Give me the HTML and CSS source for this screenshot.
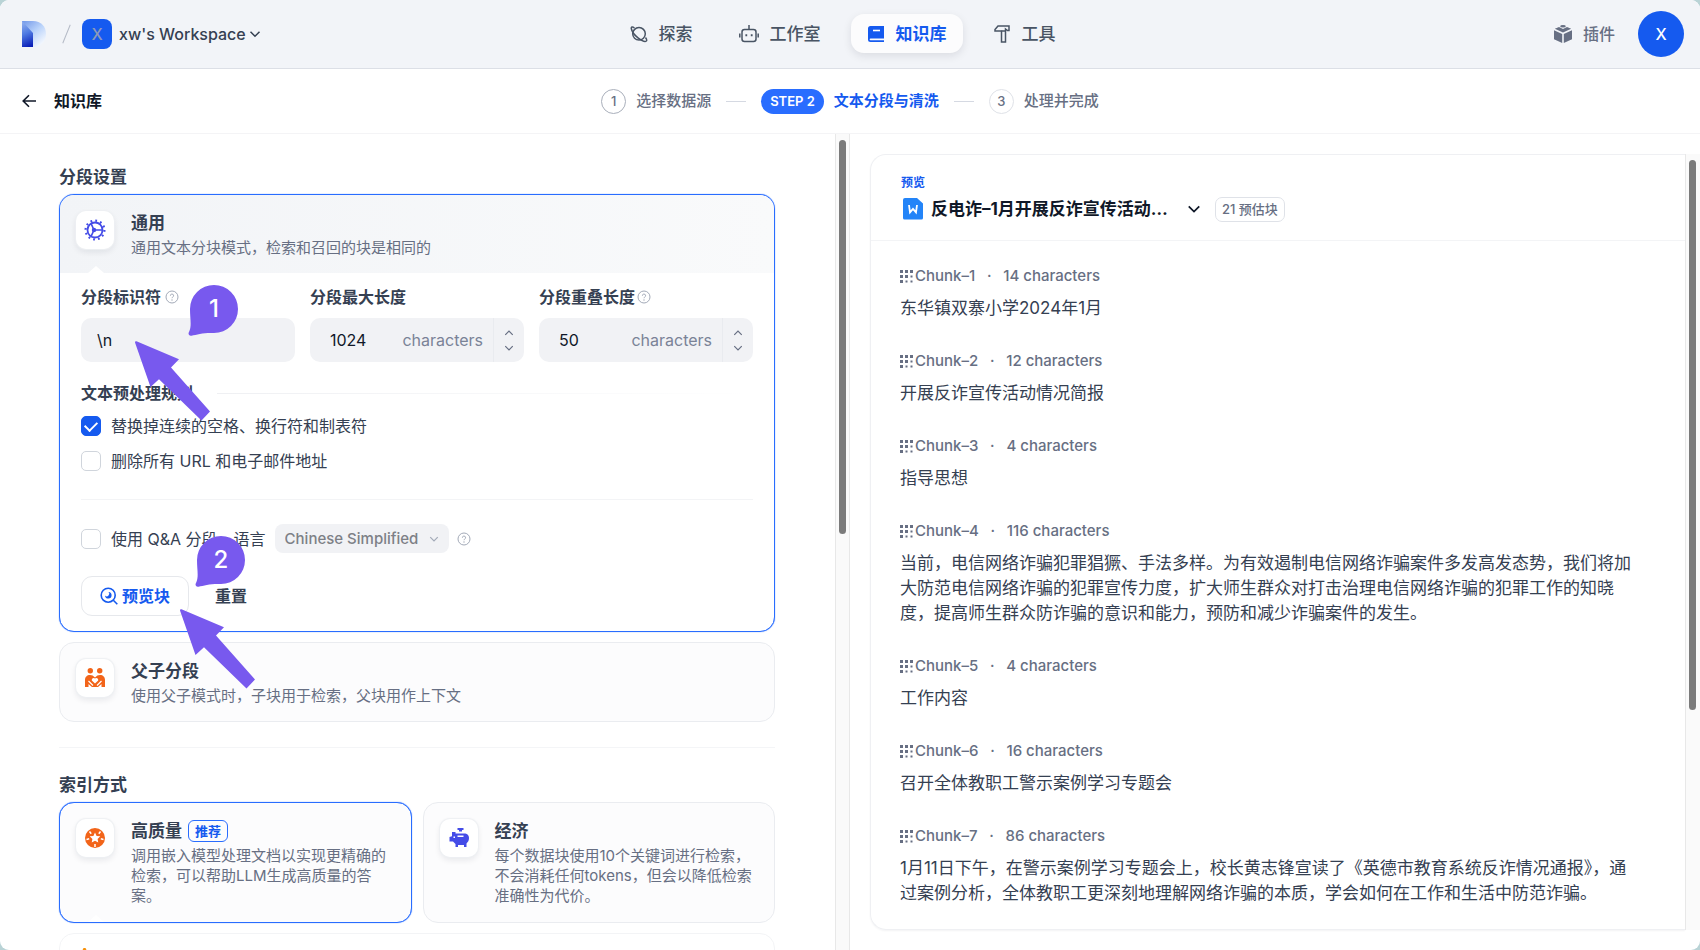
FILE: index.html
```html
<!DOCTYPE html>
<html lang="zh-CN">
<head>
<meta charset="utf-8">
<title>知识库 - 文本分段与清洗</title>
<link rel="stylesheet" href="styles.css">
</head>
<body>
<svg class="defs" aria-hidden="true">
  <defs>
    <linearGradient id="stem" x1="0.400" y1="0" x2="0.600" y2="1"><stop offset="0" stop-color="#8cacee"/><stop offset="0.450" stop-color="#4f7ae2"/><stop offset="1" stop-color="#0a1fb8"/></linearGradient>
    <linearGradient id="bowl" x1="0" y1="0" x2="0.800" y2="1"><stop offset="0" stop-color="#7096e8"/><stop offset="0.500" stop-color="#b9d2fa"/><stop offset="1" stop-color="#fbfcfe"/></linearGradient>
  </defs>
  <symbol id="i-down" viewBox="0 0 12 12"><path d="M1.500 3.800 6 8.200l4.500-4.400" fill="none" stroke="currentColor" stroke-width="1.500"/></symbol>
  <symbol id="i-help" viewBox="0 0 14 14"><circle cx="7" cy="7" r="6" fill="none" stroke="currentColor"/><path d="M5.400 5.700a1.600 1.600 0 1 1 2.300 1.400c-.5.300-.7.500-.7 1.100" fill="none" stroke="currentColor"/><circle cx="7" cy="10" r=".7" fill="currentColor"/></symbol>
  <symbol id="i-grid" viewBox="0 0 13 13"><path fill="currentColor" d="M0 0h3v3H0zM5 0h3v3H5zM10 0h3v3h-3zM0 5h3v3H0zM5 5h3v3H5zM10.500 5.500h2v2h-2zM0 10h3v3H0zM5.500 10.500h2v2h-2zM10.500 10.500h2v2h-2z"/></symbol>
  <symbol id="arrow" viewBox="0 0 76 80"><path fill="#7859ee" d="M0 1.500Q0-.2 1.500.3L44 18.200 36 26.500 75 70.500 66.500 79.500 24 38.200 15.500 46Z"/></symbol>
  <symbol id="pin" viewBox="0 0 52 52"><path fill="#7859ee" d="M26 0a24 24 0 1 1 0 48C16 47.500 9 49.500 3.500 50.700 1 51.200-.2 49 1 47 4 41 2 34 2 24A24 24 0 0 1 26 0Z"/></symbol>
</svg>

<div class="app">
  <header class="topbar">
    <div class="brand">
      <svg class="logo" viewBox="0 0 24 26" aria-label="Dify"><path d="M0 0h11c8 0 13 5.500 13 13s-5 13-13 13H0z" fill="url(#bowl)"/><path d="M0 0 11 12v14H0z" fill="url(#stem)"/></svg>
      <span class="slash"></span>
      <button class="workspace" type="button"><span class="ws-mark">X</span><span>xw's Workspace</span><svg class="s12"><use href="#i-down"/></svg></button>
    </div>
    <nav class="nav">
      <a href="#"><svg class="s18" viewBox="0 0 18 18" fill="none" stroke="currentColor" stroke-width="1.500"><circle cx="9" cy="8.800" r="6.300"/><path d="M4.500 3C2.500 1.500 1 1.800 1.300 3.500 2 7 5 10.500 8 12.800c3.500 2.700 7 4.200 8.300 3.200.8-.7.300-2-.8-3.500"/></svg>探索</a>
      <a href="#"><svg class="s20" viewBox="0 0 20 18" fill="none" stroke="currentColor" stroke-width="1.500"><rect x="3" y="4.500" width="14" height="12" rx="2.500"/><path d="M10 4.500V0M.8 8.500v4M19.200 8.500v4"/><path d="M7.300 9.300v2M12.700 9.300v2" stroke-width="1.800"/></svg>工作室</a>
      <a href="#" class="on" aria-current="page"><svg class="s18" viewBox="0 0 18 18"><path fill="currentColor" d="M3.500 1H17v12.500H3.500a.8.8 0 0 0 0 1.700H17V17H3.500A2.500 2.500 0 0 1 1 14.500v-11A2.500 2.500 0 0 1 3.500 1Z"/><path d="M6 5.500h7" stroke="#fff" stroke-width="1.600"/></svg>知识库</a>
      <a href="#"><svg class="s18" viewBox="0 0 18 18" fill="none" stroke="currentColor" stroke-width="1.500"><path d="M5 1h11v4.500h-1.500l-2-1.500v13h-4V6H2V4.500z"/><path d="M8.500 6h4"/></svg>工具</a>
    </nav>
    <div class="account">
      <a href="#"><svg class="s18" viewBox="0 0 18 18" fill="currentColor"><path d="M0 5.300 8.200 9v9L0 14.300zM18 5.300 9.800 9v9l8.200-3.700z"/><path d="M.8 3.800 5 1.900l4 2 4-2 4.200 1.900L9 7.600z"/><ellipse cx="9" cy="1.300" rx="2.800" ry="1.300"/></svg>插件</a>
      <button class="avatar" type="button" aria-label="账户">X</button>
    </div>
  </header>

  <div class="stepbar">
    <a class="back" href="#"><svg class="s14" viewBox="0 0 14 14" fill="none" stroke="currentColor" stroke-width="1.600"><path d="M14 7H1.500M7 1.200 1.200 7 7 12.800"/></svg>知识库</a>
    <ol class="steps">
      <li><span class="num">1</span>选择数据源</li>
      <li class="now"><span class="pill">STEP 2</span>文本分段与清洗</li>
      <li class="later"><span class="num">3</span>处理并完成</li>
    </ol>
  </div>

  <div class="main">
    <main class="form">
      <h2>分段设置</h2>
      <section class="card active general">
        <header class="card-head tinted">
          <span class="tile"><svg class="s22" viewBox="0 0 22 22" fill="none" stroke="#444ce7" stroke-width="1.800"><circle cx="11" cy="11" r="7.500"/><circle cx="11" cy="11" r="9.400" stroke-dasharray="1.800 3.122" stroke-width="2.200"/><path d="M10 11h9M10 11 7.200 4.800M10 11l-2.800 6.200" stroke-width="1.600"/><circle cx="10" cy="11" r="1.300" fill="#444ce7"/></svg></span>
          <div><h3>通用</h3><p>通用文本分块模式，检索和召回的块是相同的</p></div>
        </header>
        <div class="card-body">
          <div class="fields">
            <div class="field"><label for="sep">分段标识符<svg class="s14 help"><use href="#i-help"/></svg></label>
              <div class="box"><input id="sep" type="text" value="\n"></div></div>
            <div class="field"><label for="max">分段最大长度</label>
              <div class="box number"><input id="max" type="text" inputmode="numeric" value="1024"><span class="unit">characters</span><span class="spin"><button type="button" aria-label="增加"><svg class="s10 flip"><use href="#i-down"/></svg></button><button type="button" aria-label="减少"><svg class="s10"><use href="#i-down"/></svg></button></span></div></div>
            <div class="field"><label for="lap" class="tight">分段重叠长度<svg class="s14 help"><use href="#i-help"/></svg></label>
              <div class="box number"><input id="lap" type="text" inputmode="numeric" value="50"><span class="unit">characters</span><span class="spin"><button type="button" aria-label="增加"><svg class="s10 flip"><use href="#i-down"/></svg></button><button type="button" aria-label="减少"><svg class="s10"><use href="#i-down"/></svg></button></span></div></div>
          </div>
          <h4><span>文本预处理规则</span></h4>
          <div class="checks">
            <label class="check"><input type="checkbox" checked>替换掉连续的空格、换行符和制表符</label>
            <label class="check"><input type="checkbox">删除所有 URL 和电子邮件地址</label>
          </div>
          <div class="qa">
            <label class="check"><input type="checkbox">使用 Q&amp;A 分段，语言</label>
            <span class="select"><select aria-label="语言" disabled><option>Chinese Simplified</option></select><svg class="s10"><use href="#i-down"/></svg></span>
            <svg class="s14 help"><use href="#i-help"/></svg>
          </div>
          <div class="actions">
            <button class="btn" type="button"><svg class="s18" viewBox="0 0 18 18" fill="none" stroke="currentColor" stroke-width="1.600"><circle cx="8.200" cy="8.200" r="7"/><path d="m13.300 13.300 4 4"/><path d="M8.500 5A3.300 3.300 0 1 1 5 8.500 2.300 2.300 0 0 0 8.500 5Z" fill="currentColor" stroke="none"/></svg>预览块</button>
            <button class="plain" type="button">重置</button>
          </div>
        </div>
        <div class="mark mark1"><svg class="pin"><use href="#pin"/></svg><span>1</span></div>
        <svg class="arrow arrow1"><use href="#arrow"/></svg>
        <div class="mark mark2"><svg class="pin"><use href="#pin"/></svg><span>2</span></div>
        <svg class="arrow arrow2"><use href="#arrow"/></svg>
      </section>
      <section class="card parent">
        <header class="card-head">
          <span class="tile"><svg class="s22" viewBox="0 0 22 22" fill="#f26419"><circle cx="6.300" cy="3.800" r="2.700"/><circle cx="15.700" cy="3.800" r="2.700"/><path d="M1 20v-7c0-3 2-5 5-5 2.200 0 3.300.8 5 2.500C12.700 8.800 13.800 8 16 8c3 0 5 2 5 5v7h-3.500v-3L14 20H8l-3.500-3v3z"/><path d="M11 16.500 7.800 13.500a2 2 0 0 1 3.200-2 2 2 0 0 1 3.200 2z" fill="#fff"/><path d="m4.500 14 4.500 4.500M17.500 14 13 18.500" stroke="#fff" stroke-width="1.200"/></svg></span>
          <div><h3>父子分段</h3><p>使用父子模式时，子块用于检索，父块用作上下文</p></div>
        </header>
      </section>
      <hr>
      <h2>索引方式</h2>
      <div class="index">
        <section class="card active">
          <header class="card-head notch">
            <span class="tile"><svg class="s22" viewBox="0 0 22 22"><circle cx="11" cy="11" r="10" fill="#f26419"/><path fill="#fff" d="m11 5.500 1.600 3.400 3.700.4-2.700 2.600.7 3.700-3.300-1.800-3.300 1.800.7-3.700-2.700-2.600 3.700-.4z"/><path d="m5.500 4.500 1.700 2.200M16.500 4.500l-1.700 2.200M2.500 12.500l2.700-.7M19.500 12.500l-2.700-.7M11 17v3" stroke="#fff" stroke-width="1.500"/></svg></span>
            <div><h3>高质量<span class="tag">推荐</span></h3><p>调用嵌入模型处理文档以实现更精确的检索，可以帮助LLM生成高质量的答案。</p></div>
          </header>
        </section>
        <section class="card">
          <header class="card-head">
            <span class="tile"><svg class="s22" viewBox="0 0 22 22" fill="#444ce7"><path d="M9.500 1h6v2h-1.500v1.500h-3V3H9.500z"/><path d="M4 5h3.500v1.500H16c3.500 0 5 2 5 4.500s-1 4-2.500 5.500V20H16v-2h-6v2H7.500v-3L5 14.500H1.500V10l2.500-.8z"/><path d="M9.500 8.500h6V10h-6zM5.500 9.500h1.500V11H5.500z" fill="#fff"/></svg></span>
            <div><h3>经济</h3><p>每个数据块使用10个关键词进行检索，不会消耗任何tokens，但会以降低检索准确性为代价。</p></div>
          </header>
        </section>
      </div>
      <section class="card next"><svg class="s22" viewBox="0 0 22 22"><path d="M7.500 0h2l8 16H0z" fill="#f79009"/></svg></section>
    </main>
    <div class="track"><div class="thumb thumb-form"></div></div>
    <aside class="side">
      <article class="preview">
        <header class="preview-head">
          <p class="eyebrow">预览</p>
          <div class="doc-row">
            <button class="doc" type="button"><svg class="doc-icon" viewBox="0 0 20 22"><path d="M2 0h12l6 5.500V20a1.500 1.500 0 0 1-1.500 1.500h-17A1.500 1.500 0 0 1 0 20V2a2 2 0 0 1 2-2Z" fill="#2384f8"/><path d="m6 7 1 7.300 3-3.500 3 3.500L14 7" fill="none" stroke="#fff" stroke-width="1.800"/></svg><span>反电诈–1月开展反诈宣传活动…</span><svg class="s14 chev"><use href="#i-down"/></svg></button>
            <span class="count">21 预估块</span>
          </div>
        </header>
        <div class="chunks">
          <section><h5><svg class="s13"><use href="#i-grid"/></svg>Chunk–1<i>·</i>14 characters</h5><p>东华镇双寨小学2024年1月</p></section>
          <section><h5><svg class="s13"><use href="#i-grid"/></svg>Chunk–2<i>·</i>12 characters</h5><p>开展反诈宣传活动情况简报</p></section>
          <section><h5><svg class="s13"><use href="#i-grid"/></svg>Chunk–3<i>·</i>4 characters</h5><p>指导思想</p></section>
          <section><h5><svg class="s13"><use href="#i-grid"/></svg>Chunk–4<i>·</i>116 characters</h5><p>当前，电信网络诈骗犯罪猖獗、手法多样。为有效遏制电信网络诈骗案件多发高发态势，我们将加大防范电信网络诈骗的犯罪宣传力度，扩大师生群众对打击治理电信网络诈骗的犯罪工作的知晓度，提高师生群众防诈骗的意识和能力，预防和减少诈骗案件的发生。</p></section>
          <section><h5><svg class="s13"><use href="#i-grid"/></svg>Chunk–5<i>·</i>4 characters</h5><p>工作内容</p></section>
          <section><h5><svg class="s13"><use href="#i-grid"/></svg>Chunk–6<i>·</i>16 characters</h5><p>召开全体教职工警示案例学习专题会</p></section>
          <section><h5><svg class="s13"><use href="#i-grid"/></svg>Chunk–7<i>·</i>86 characters</h5><p>1月11日下午，在警示案例学习专题会上，校长黄志锋宣读了《英德市教育系统反诈情况通报》，通过案例分析，全体教职工更深刻地理解网络诈骗的本质，学会如何在工作和生活中防范诈骗。</p></section>
        </div>
      </article>
      <div class="track track-side"><div class="thumb thumb-side"></div></div>
    </aside>
  </div>
</div>
</body>
</html>
```
FILE: styles.css
```css
* { box-sizing: border-box; }
body, h2, h3, h4, h5, p, ol { margin: 0; padding: 0; }
body {
  background: #b9d3d6;
  color: #354052;
  font-family: Inter, "Noto Sans CJK SC", sans-serif;
  font-size: 16px;
  line-height: 20px;
}
a { color: inherit; text-decoration: none; }
button, input, select { font: inherit; color: inherit; border: 0; padding: 0; background: none; }
svg { flex: none; display: block; }
.defs { position: absolute; width: 0; height: 0; }
.s10 { width: 10px; height: 10px; }
.s12 { width: 12px; height: 12px; }
.s13 { width: 13px; height: 13px; }
.s14 { width: 14px; height: 14px; }
.s18 { width: 18px; height: 18px; }
.s20 { width: 20px; height: 18px; }
.s22 { width: 22px; height: 22px; }
.flip { transform: rotate(180deg); }

.app {
  display: flex;
  flex-direction: column;
  height: 100vh;
  overflow: hidden;
  border-radius: 9px;
  background: #fff;
}

/* top bar */
.topbar {
  display: grid;
  grid-template-columns: 1fr auto 1fr;
  align-items: center;
  height: 69px;
  padding: 0 16px 1px 22px;
  border-bottom: 1px solid #dcdfe6;
  background: #f2f4f8;
}
.brand, .workspace, .nav, .nav a, .account, .account a { display: flex; align-items: center; }
.logo { width: 24px; height: 26px; }
.slash { width: 1px; height: 20px; margin: 0 15px 0 20px; background: #b4bac6; transform: rotate(22deg); }
.workspace { gap: 7px; font-weight: 500; color: #354052; }
.workspace .s12 { margin-left: -4px; }
.ws-mark {
  width: 30px;
  height: 30px;
  border-radius: 8px;
  background: #155aef;
  color: #8d9ab8;
  line-height: 30px;
  text-align: center;
}
.nav { gap: 14px; padding-right: 21px; }
.nav a {
  gap: 11px;
  height: 39px;
  padding: 0 16px;
  border-radius: 13px;
  color: #495464;
  font-size: 17px;
  font-weight: 500;
}
.nav .on {
  background: #fcfcfd;
  color: #155aef;
  font-weight: 700;
  box-shadow: 0 3px 8px rgba(16, 24, 40, 0.1);
}
.account { justify-content: flex-end; gap: 23px; color: #676f83; font-weight: 500; }
.account a { gap: 11px; }
.avatar { width: 46px; height: 46px; border-radius: 50%; background: #155aef; color: #fff; }

/* steps */
.stepbar {
  display: grid;
  grid-template-columns: 1fr auto 1fr;
  align-items: center;
  height: 65px;
  padding: 0 22px;
  border-bottom: 1px solid #f4f4f6;
}
.back { display: flex; align-items: center; gap: 18px; color: #101828; font-weight: 700; }
.steps { display: flex; gap: 15px; list-style: none; color: #676f83; font-size: 15px; font-weight: 500; }
.steps li { display: flex; align-items: center; gap: 10px; }
.steps li + li::before { content: ""; width: 20px; height: 1px; margin-right: 5px; background: #d5d9e2; }
.num, .pill { height: 25px; border-radius: 13px; font-size: 13px; line-height: 23px; text-align: center; }
.num { width: 25px; border: 1px solid #a9afbb; }
.later .num { border-color: #dfe2e8; }
.pill { padding: 0 9px; background: #296dff; color: #fff; line-height: 25px; font-weight: 600; }
.now { color: #155aef; font-weight: 700; }

/* columns */
.main { display: grid; grid-template-columns: minmax(0, 835fr) 15px minmax(0, 850fr); flex: 1; min-height: 0; }
.form { padding: 33px 60px 0 59px; overflow: hidden; }
.side { display: flex; min-height: 0; padding: 20px 0 20px 20px; }
.track { flex: none; width: 15px; padding: 6px 3px; border: solid #e8e8e8; border-width: 0 1px; background: #fafafa; }
.track-side { border-right: 0; }
.thumb { width: 7px; border-radius: 4px; background: #7b7b7b; }
.thumb-form { height: 49%; }
.thumb-side { height: 72%; }

h2, h3 { font-size: 17px; font-weight: 700; }
h2 { line-height: 20px; margin-bottom: 7px; }
.card {
  border: 1px solid #eaecf0;
  border-radius: 15px;
  background: #fcfcfd;
  margin-bottom: 10px;
}
.active { border-color: #296dff; box-shadow: 0 0 1px #296dff; }
.card-head { position: relative; display: flex; gap: 17px; padding: 15px 16px; }
.card-head h3 { display: flex; align-items: center; gap: 6px; height: 26px; margin-bottom: 2px; }
.card-head p { color: #676f83; font-size: 15px; }
.tile {
  display: grid;
  place-items: center;
  flex: none;
  width: 38px;
  height: 38px;
  margin-top: 1px;
  border-radius: 10px;
  background: #fff;
  box-shadow: 0 0 1px 1px #eef0f3, 0 3px 6px rgba(16, 24, 40, 0.09);
}
.general { position: relative; background: #fff; }
.tinted { height: 78px; border-radius: 14px 14px 0 0; background: linear-gradient(90deg, #f2f4f7, #f9fafb); }
.tinted::after, .notch::after {
  content: "";
  position: absolute;
  bottom: 0;
  left: 28px;
  border: 8px solid transparent;
  border-top: 0;
  border-bottom: 7px solid #fff;
}
.card-body { padding: 14px 21px 15px; }
.fields { display: grid; grid-template-columns: repeat(3, 1fr); gap: 15px; }
.field label, h4 { display: flex; align-items: center; gap: 4px; height: 20px; font-size: 16px; font-weight: 700; }
.field .tight { gap: 2px; }
.help { color: #a3aab8; }
.box { display: flex; height: 44px; margin-top: 11px; border-radius: 10px; background: #f1f2f5; overflow: hidden; }
.box input { flex: 1; width: 0; padding-left: 16px; color: #101828; outline: 0; }
.number input { padding-left: 20px; }
.unit { align-self: center; margin-right: 10px; color: #7a8397; }
.spin { display: flex; flex-direction: column; justify-content: center; gap: 5px; width: 31px; border-left: 1px solid #e9ebef; color: #676f83; }
.spin button { display: grid; place-items: center; }
h4 { gap: 24px; margin-top: 21px; }
h4::after { content: ""; flex: 1; height: 1px; background: linear-gradient(90deg, #eff0f3, #fff); }
.checks { display: grid; gap: 15px; padding: 13px 0 28px; border-bottom: 1px solid #f3f4f6; }
.check { display: flex; align-items: center; gap: 10px; }
.check input {
  appearance: none;
  width: 20px;
  height: 20px;
  margin: 0;
  border: 1px solid #d0d5dc;
  border-radius: 5px;
  background: #fff;
}
.check input:checked { display: grid; place-items: center; border-color: #155aef; background: #155aef; }
.check input:checked::after {
  content: "";
  width: 10px;
  height: 6px;
  margin-bottom: 3px;
  border: solid #fff;
  border-width: 0 0 2px 2px;
  transform: rotate(-45deg);
}
.qa { display: flex; align-items: center; height: 29px; margin-top: 24px; }
.select {
  display: flex;
  align-items: center;
  height: 29px;
  margin: 0 8px 0 9px;
  padding: 0 10px;
  gap: 10px;
  border-radius: 8px;
  background: #f1f2f5;
  color: #a3aab8;
}
select { appearance: none; opacity: 1; font-size: 15px; font-weight: 500; }
.select select { color: #7d8086; }
.actions { display: flex; align-items: center; gap: 26px; margin-top: 23px; font-weight: 700; }
.btn {
  display: flex;
  align-items: center;
  gap: 4px;
  height: 40px;
  padding: 0 18px;
  border: 1px solid #e6e8ec;
  border-radius: 11px;
  background: #fff;
  color: #155aef;
}
.parent { height: 80px; }
hr { margin: 25px 0 27px; border: 0; border-top: 1px solid #f4f5f7; }
.index { display: grid; grid-template-columns: 1fr 1fr; gap: 11px; margin-bottom: 10px; }
.index .card { min-height: 121px; margin: 0; }
.index .card-head { height: 100%; padding-right: 19px; }
.tag { height: 22px; padding: 0 6px; border: 1px solid #296dff; border-radius: 6px; color: #155aef; font-size: 13px; line-height: 20px; }
.next { height: 90px; padding: 14px 16px; background: #fff; border-color: #f3f4f6; }

/* guide marks over the form */
.mark { position: absolute; width: 52px; height: 52px; }
.pin { position: absolute; width: 52px; height: 52px; }
.mark span { position: absolute; left: 2px; width: 48px; color: #fff; font-size: 24px; font-weight: 500; line-height: 48px; text-align: center; }
.mark1 { left: 128px; top: 90px; }
.mark2 { left: 135px; top: 341px; }
.arrow { position: absolute; width: 76px; height: 80px; }
.arrow1 { left: 75px; top: 146px; }
.arrow2 { left: 120px; top: 414px; }

/* preview */
.preview { flex: 1; min-width: 0; border: solid #eff0f3; border-width: 1px 0 1px 1px; border-radius: 16px 0 0 16px; overflow: hidden; box-shadow: 0 1px 2px rgba(16, 24, 40, 0.05); }
.preview-head { padding: 18px 30px 16px; border-bottom: 1px solid #f3f4f6; }
.eyebrow { color: #155aef; font-size: 12px; font-weight: 700; }
.doc-row, .doc { display: flex; align-items: center; }
.doc-row { gap: 14px; height: 30px; margin-top: 1px; }
.doc { padding-left: 2px; color: #101828; font-size: 17px; font-weight: 700; }
.doc-icon { width: 20px; height: 22px; margin-right: 8px; }
.chev { margin-left: 19px; }
.count { height: 25px; padding: 0 6px; border: 1px solid #dfe2e8; border-radius: 7px; color: #676f83; font-size: 13px; font-weight: 500; line-height: 23px; }
.chunks { display: grid; gap: 29px; padding: 24px 46px 0 29px; }
h5 { display: flex; align-items: center; gap: 2px; height: 22px; color: #676f83; font-size: 15px; font-weight: 500; }
h5 i { width: 24px; font-style: normal; text-align: center; }
.chunks p { margin-top: 9px; font-size: 17px; line-height: 25px; }
```
